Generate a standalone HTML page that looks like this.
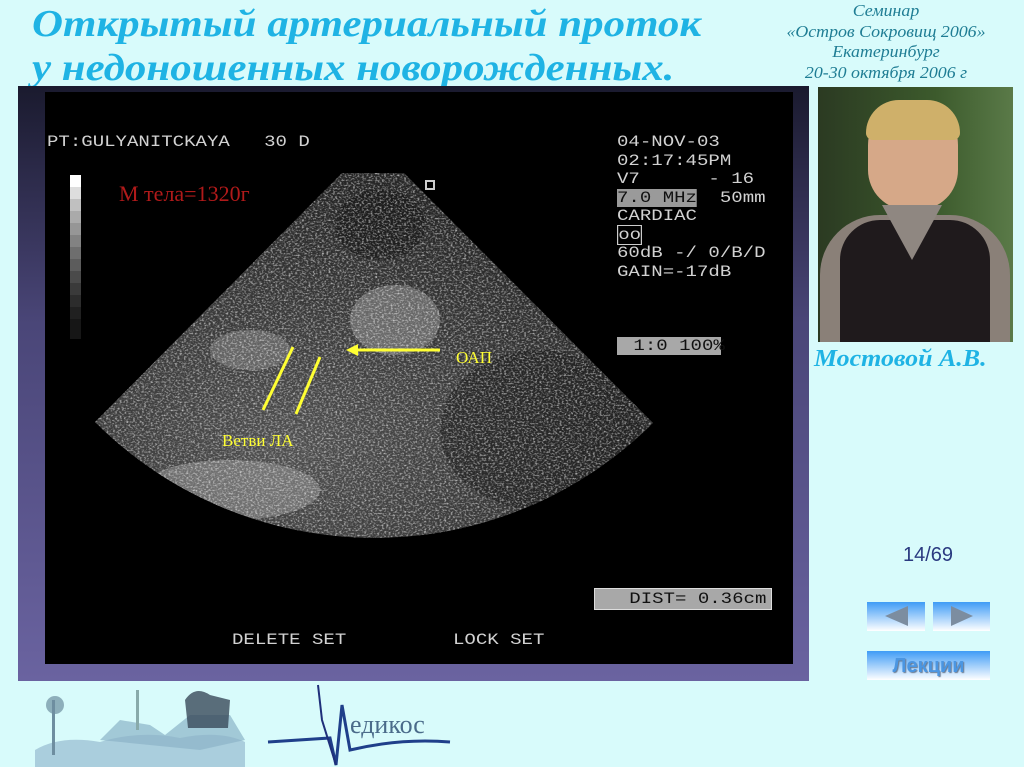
<!DOCTYPE html>
<html><head><meta charset="utf-8"><style>
*{margin:0;padding:0}
body{width:1024px;height:767px;overflow:hidden;background:#d8fbfb;position:relative;font-family:"Liberation Sans",sans-serif}
.abs{position:absolute}
.title{left:32px;top:2px;font-family:"Liberation Serif",serif;font-style:italic;font-weight:bold;font-size:38px;line-height:44px;color:#1fb3e4;transform:scaleX(1.13);transform-origin:0 0;white-space:nowrap}
.sem{left:770px;top:1px;width:232px;text-align:center;font-family:"Liberation Serif",serif;font-style:italic;font-size:17px;line-height:20.5px;color:#1f7d94;transform:scaleX(1.05);transform-origin:50% 0}
.mono{font-family:"Liberation Mono",monospace;color:#d2d2d2;font-size:16px;white-space:pre;line-height:18.5px;transform:scaleX(1.19);transform-origin:0 0}
.btn{background:linear-gradient(#3f9cf6,#ffffff)}
</style></head><body>
<div class="abs title">Открытый артериальный проток<br>у недоношенных новорожденных.</div>
<div class="abs sem">Семинар<br>«Остров Сокровищ 2006»<br>Екатеринбург<br>20-30 октября 2006 г</div>

<div class="abs" style="left:18px;top:86px;width:791px;height:595px;background:linear-gradient(180deg,#1a1a2e 0%,#4a4678 40%,#6a63a0 100%)"></div>
<div class="abs" style="left:45px;top:92px;width:748px;height:572px;background:#000"></div>

<svg class="abs" style="left:0;top:0" width="1024" height="767">
<defs>
<filter id="n" x="0" y="0" width="100%" height="100%">
<feTurbulence type="fractalNoise" baseFrequency="0.45 0.6" numOctaves="2" seed="3"/>
<feColorMatrix type="matrix" values="0 0 0 0 1  0 0 0 0 1  0 0 0 0 1  0 0 0 2.2 -1.0"/>
</filter>
<radialGradient id="g" cx="0.35" cy="0.75" r="0.7">
<stop offset="0" stop-color="#505050"/><stop offset="1" stop-color="#262626"/>
</radialGradient>
<clipPath id="c"><path d="M342 173 L404 173 L653 423 A395 395 0 0 1 95 422 Z"/></clipPath>
</defs>
<g clip-path="url(#c)">
<rect x="90" y="170" width="570" height="370" fill="url(#g)"/>
<ellipse cx="395" cy="320" rx="45" ry="35" fill="#888" opacity=".6"/>
<ellipse cx="250" cy="350" rx="40" ry="20" fill="#888" opacity=".5"/>
<ellipse cx="230" cy="490" rx="90" ry="30" fill="#999" opacity=".5"/>
<ellipse cx="540" cy="430" rx="100" ry="80" fill="#1a1a1a" opacity=".5"/>
<ellipse cx="380" cy="225" rx="45" ry="35" fill="#111" opacity=".5"/>
<rect x="90" y="170" width="570" height="370" filter="url(#n)" opacity=".75"/>
</g>
<g><rect x="70" y="175" width="11" height="12" fill="#fff"/><rect x="70" y="187" width="11" height="12" fill="#ddd"/><rect x="70" y="199" width="11" height="12" fill="#c0c0c0"/><rect x="70" y="211" width="11" height="12" fill="#aaa"/><rect x="70" y="223" width="11" height="12" fill="#969696"/><rect x="70" y="235" width="11" height="12" fill="#828282"/><rect x="70" y="247" width="11" height="12" fill="#6e6e6e"/><rect x="70" y="259" width="11" height="12" fill="#5c5c5c"/><rect x="70" y="271" width="11" height="12" fill="#4a4a4a"/><rect x="70" y="283" width="11" height="12" fill="#3a3a3a"/><rect x="70" y="295" width="11" height="12" fill="#2c2c2c"/><rect x="70" y="307" width="11" height="12" fill="#202020"/><rect x="70" y="319" width="11" height="20" fill="#161616"/></g>
<g stroke="#ffff33" stroke-width="3"><line x1="293" y1="347" x2="263" y2="410"/><line x1="320" y1="357" x2="296" y2="414"/><line x1="350" y1="350" x2="440" y2="350"/></g>
<polygon points="346,350 358,344 358,356" fill="#ffff33"/>
<text x="119" y="201" font-family="Liberation Serif" font-size="22" fill="#b01a1a">М тела=1320г</text>
<text x="456" y="363" font-family="Liberation Serif" font-size="17" fill="#ffff33">ОАП</text>
<text x="222" y="446" font-family="Liberation Serif" font-size="17" fill="#ffff33">Ветви ЛА</text>
<rect x="426" y="181" width="8" height="8" fill="none" stroke="#ccc" stroke-width="2"/>
</svg>

<div class="abs mono" style="left:47px;top:133px">PT:GULYANITCKAYA   30 D</div>
<div class="abs mono" style="left:617px;top:133px">04-NOV-03
02:17:45PM
V7      - 16
<span style="background:#9a9a9a;color:#111">7.0 MHz</span>  50mm
CARDIAC
<span style="border:1px solid #ccc">oo</span>
60dB -/ 0/B/D
GAIN=-17dB</div>
<div class="abs" style="left:617px;top:337px;width:104px;height:18px;background:#a8a8a8"></div>
<div class="abs mono" style="left:622px;top:337px;color:#111"> 1:0 100%</div>
<div class="abs" style="left:594px;top:588px;width:176px;height:20px;background:#a8a8a8;border:1px solid #ddd"></div>
<div class="abs mono" style="left:595px;top:589px;color:#111;line-height:20px">   DIST= 0.36cm</div>
<div class="abs mono" style="left:232px;top:631px">DELETE SET</div>
<div class="abs mono" style="left:453px;top:631px">LOCK SET</div>

<div class="abs" style="left:818px;top:87px;width:195px;height:255px;background:linear-gradient(90deg,#2b3a22,#3c5a2c 60%,#5a7a48)"></div>
<div class="abs" style="left:868px;top:100px;width:90px;height:110px;border-radius:45px 45px 40px 40px;background:#d6a888"></div>
<div class="abs" style="left:866px;top:100px;width:94px;height:40px;border-radius:47px 47px 10px 10px;background:#cfb06a"></div>
<div class="abs" style="left:820px;top:215px;width:190px;height:127px;border-radius:60px 60px 0 0;background:#8a8078"></div>
<div class="abs" style="left:840px;top:220px;width:150px;height:122px;border-radius:40px 40px 0 0;background:#1f1a1c"></div>
<div class="abs" style="left:882px;top:205px;width:60px;height:55px;background:#8f8781;clip-path:polygon(0 0,100% 0,50% 100%)"></div>
<div class="abs" style="left:814px;top:346px;font-family:'Liberation Serif',serif;font-style:italic;font-weight:bold;font-size:24px;color:#1fb3e4;transform:scaleX(1.08);transform-origin:0 0;white-space:nowrap">Мостовой А.В.</div>

<div class="abs" style="left:903px;top:544px;font-size:20px;color:#2a3a80">14/69</div>
<div class="abs btn" style="left:867px;top:602px;width:58px;height:29px"></div>
<div class="abs btn" style="left:933px;top:602px;width:57px;height:29px"></div>
<svg class="abs" style="left:867px;top:602px" width="124" height="30"><polygon points="18,14 41,4 41,24" fill="#7c8da0"/><polygon points="84,4 106,14 84,24" fill="#7c8da0"/></svg>
<div class="abs btn" style="left:867px;top:651px;width:123px;height:29px;text-align:center;font-weight:bold;font-size:20px;line-height:30px;color:#4b96e2;text-shadow:1px 1px 1px #6a7a90">Лекции</div>

<svg class="abs" style="left:0;top:680px" width="470" height="87">
<path d="M35 70 Q60 55 100 62 Q140 50 180 58 Q220 50 245 62 L245 87 L35 87Z" fill="#9fc3d6" opacity=".8"/>
<path d="M100 60 L120 40 L150 45 L165 55 L190 35 L230 35 L245 60 L200 70 Z" fill="#8bb3c8" opacity=".7"/>
<rect x="52" y="20" width="3" height="55" fill="#6e8ea0"/>
<circle cx="55" cy="25" r="9" fill="#6e8ea0" opacity=".7"/>
<rect x="136" y="10" width="3" height="40" fill="#8aa"/>
<path d="M185 20 Q195 5 210 15 L230 20 L228 48 L188 48 Z" fill="#3a4a5a" opacity=".8"/>
<path d="M268 62 L330 58 L336 85 L342 25 L350 70 Q400 58 450 62" fill="none" stroke="#1f3f8a" stroke-width="3"/>
<path d="M318 5 L322 40 L336 85" fill="none" stroke="#1f2f7a" stroke-width="2"/>
<text x="350" y="53" font-family="Liberation Serif" font-size="26" fill="#4a6b8a">едикос</text>
</svg>
</body></html>
